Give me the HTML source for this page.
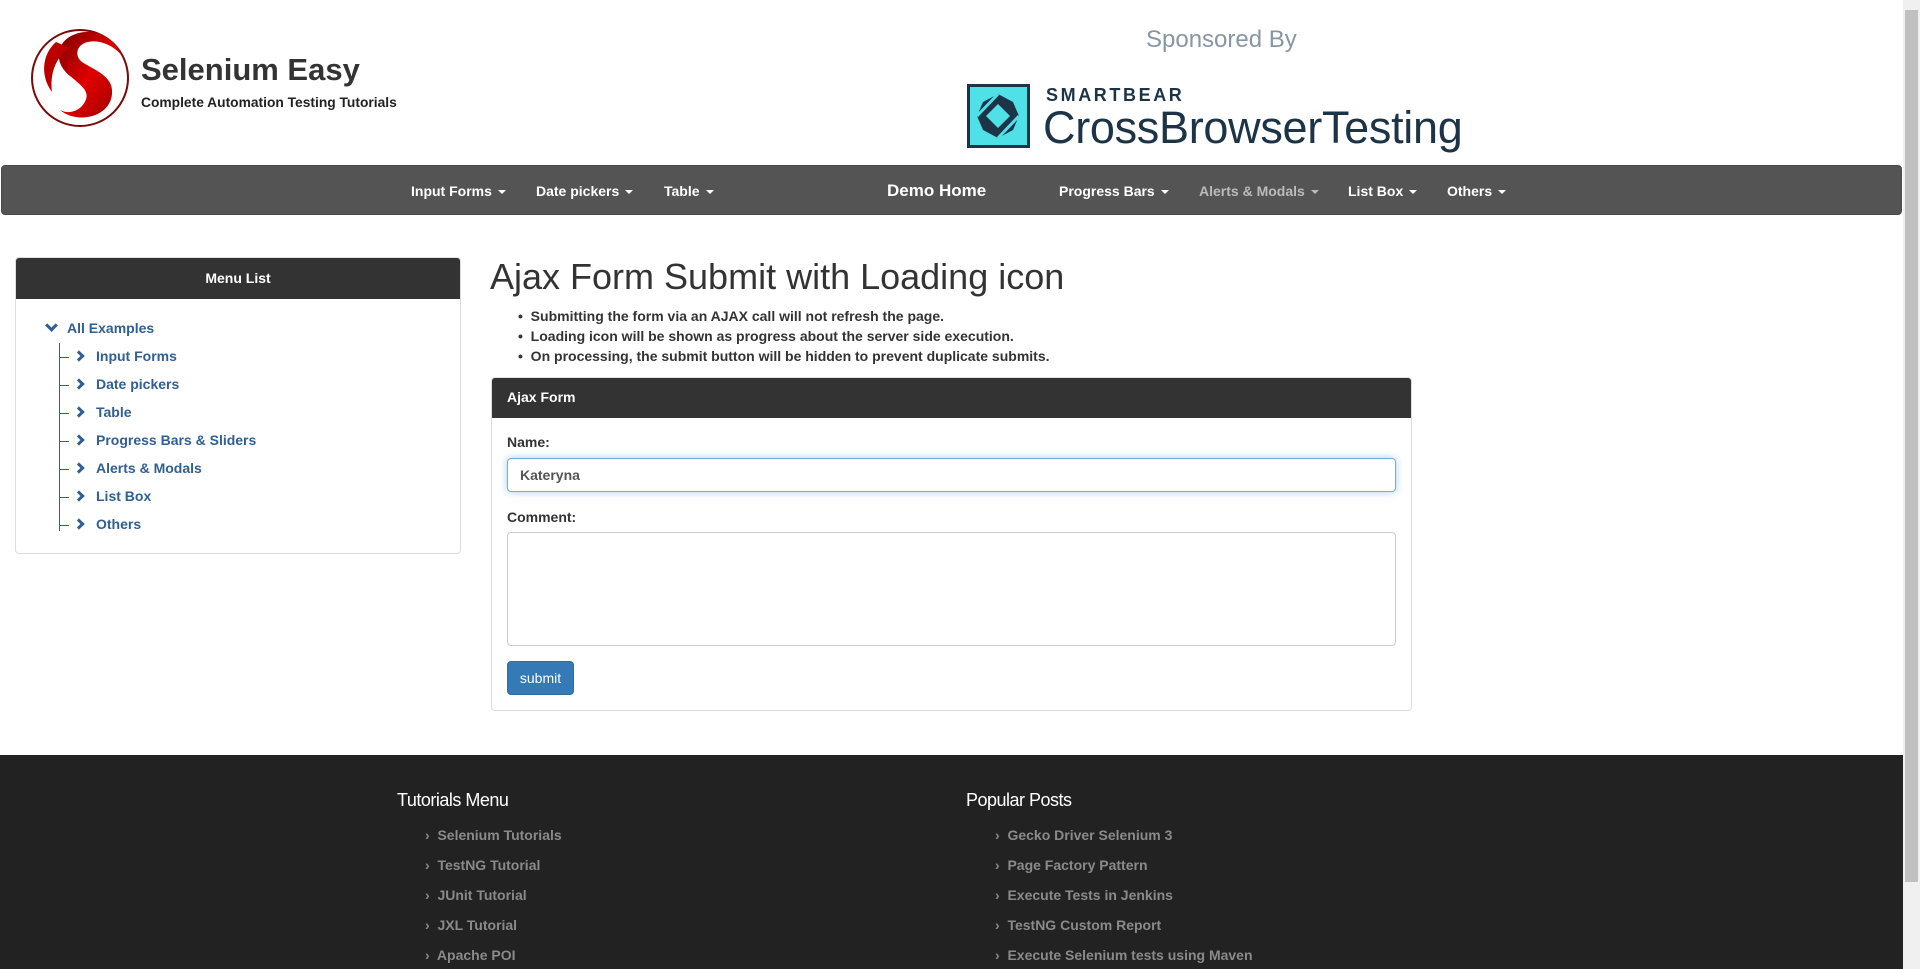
<!DOCTYPE html>
<html><head><meta charset="utf-8"><style>
*{box-sizing:border-box;margin:0;padding:0}
body{width:1920px;height:969px;overflow:hidden;background:#fff;font-family:"Liberation Sans",Arial,sans-serif;color:#333;position:relative}
.a{position:absolute;white-space:nowrap}
.nav{left:1px;top:165px;width:1901px;height:50px;background:#545454;border-radius:4px;border:1px solid #4a4a4a}
.ni{top:183px;color:#fff;font-weight:bold;font-size:14px}
.ni::after{content:"";display:inline-block;margin-left:6px;vertical-align:middle;border-top:4px solid currentColor;border-left:4px solid transparent;border-right:4px solid transparent}
.side{left:15px;top:257px;width:446px;height:297px;border:1px solid #ddd;border-radius:4px;overflow:hidden}
.hd{background:#333;color:#fff;font-weight:bold;font-size:14px}
.tr{color:#2f5f93;font-weight:bold;font-size:14px}
.chev{position:absolute;width:8px;height:8px;border-right:3px solid #2f5f93;border-bottom:3px solid #2f5f93;transform:rotate(-45deg)}
.li{font-weight:bold;font-size:14px;color:#333}
.ft{color:#8a8a8a;font-weight:bold;font-size:14px}
</style></head><body>
<svg class="a" style="left:30px;top:28px" width="100" height="100" viewBox="0 0 100 100">
<defs><linearGradient id="g" x1="0" y1="0" x2="1" y2="1"><stop offset="0" stop-color="#7a0000"/><stop offset=".5" stop-color="#e00000"/><stop offset="1" stop-color="#900"/></linearGradient></defs>
<circle cx="50" cy="50" r="48" fill="none" stroke="#7a0a0a" stroke-width="2"/>
<path d="M62 4 C30 2 18 30 40 48 C55 60 62 66 52 78 C46 84 38 86 30 82 C46 96 80 90 82 66 C84 48 64 42 52 34 C42 26 48 10 70 14 C78 16 86 20 92 28 C86 14 76 6 62 4Z" fill="url(#g)"/>
<path d="M26 14 C12 26 10 48 22 64 C20 48 24 30 40 20Z" fill="#b00"/>
</svg>
<div class="a" style="left:141px;top:52px;font-size:31px;font-weight:bold;color:#333">Selenium Easy</div>
<div class="a" style="left:141px;top:95px;font-size:13.8px;font-weight:bold;color:#222">Complete Automation Testing Tutorials</div>
<div class="a" style="left:1146px;top:26px;font-size:24px;color:#8896a4;font-weight:300">Sponsored By</div>
<svg class="a" style="left:967px;top:84px" width="63" height="64" viewBox="0 0 63 64"><rect x="1.5" y="1.5" width="60" height="61" fill="#4fe0e8" stroke="#1c3446" stroke-width="3"/><path d="M31 10 L46 18 L52 32 L46 46 L31 54 L16 46 L10 32 L16 18Z" fill="#1c3446"/><path d="M31 20 L43 32 L31 44 L19 32Z" fill="#4fe0e8"/><path d="M10 32 L31 10 M52 32 L31 54" stroke="#4fe0e8" stroke-width="3"/></svg>
<div class="a" style="left:1046px;top:85px;font-size:18px;font-weight:bold;letter-spacing:2.6px;color:#1c3446">SMARTBEAR</div>
<div class="a" style="left:1043px;top:102px;font-size:45px;color:#1c3446;letter-spacing:-.3px">CrossBrowserTesting</div>
<div class="a nav"></div>
<div class="a ni" style="left:411px">Input Forms</div>
<div class="a ni" style="left:536px">Date pickers</div>
<div class="a ni" style="left:664px">Table</div>
<div class="a" style="left:887px;top:181px;color:#fff;font-weight:bold;font-size:17px">Demo Home</div>
<div class="a ni" style="left:1059px">Progress Bars</div>
<div class="a ni" style="left:1199px;color:#bbb">Alerts &amp; Modals</div>
<div class="a ni" style="left:1348px">List Box</div>
<div class="a ni" style="left:1447px">Others</div>
<div class="a side"><div class="hd" style="height:41px;line-height:41px;text-align:center">Menu List</div></div>
<div class="a" style="left:47px;top:321px;width:9px;height:9px;border-right:3px solid #2f5f93;border-bottom:3px solid #2f5f93;transform:rotate(45deg)"></div>
<div class="a tr" style="left:67px;top:320px">All Examples</div>
<div class="a" style="left:59px;top:343px;width:1px;height:188px;background:#2f5f93"></div>
<div class="a" style="left:59px;top:357px;width:10px;height:1px;background:#2f5f93"></div>
<div class="a" style="left:59px;top:385px;width:10px;height:1px;background:#2f5f93"></div>
<div class="a" style="left:59px;top:413px;width:10px;height:1px;background:#2f5f93"></div>
<div class="a" style="left:59px;top:441px;width:10px;height:1px;background:#2f5f93"></div>
<div class="a" style="left:59px;top:469px;width:10px;height:1px;background:#2f5f93"></div>
<div class="a" style="left:59px;top:497px;width:10px;height:1px;background:#2f5f93"></div>
<div class="a" style="left:59px;top:525px;width:10px;height:1px;background:#2f5f93"></div>
<div class="chev" style="left:75px;top:352px"></div><div class="a tr" style="left:96px;top:348px">Input Forms</div>
<div class="chev" style="left:75px;top:380px"></div><div class="a tr" style="left:96px;top:376px">Date pickers</div>
<div class="chev" style="left:75px;top:408px"></div><div class="a tr" style="left:96px;top:404px">Table</div>
<div class="chev" style="left:75px;top:436px"></div><div class="a tr" style="left:96px;top:432px">Progress Bars &amp; Sliders</div>
<div class="chev" style="left:75px;top:464px"></div><div class="a tr" style="left:96px;top:460px">Alerts &amp; Modals</div>
<div class="chev" style="left:75px;top:492px"></div><div class="a tr" style="left:96px;top:488px">List Box</div>
<div class="chev" style="left:75px;top:520px"></div><div class="a tr" style="left:96px;top:516px">Others</div>
<div class="a" style="left:490px;top:256px;font-size:36px;color:#333">Ajax Form Submit with Loading icon</div>
<div class="a li" style="left:518px;top:308px">•&nbsp;&nbsp;Submitting the form via an AJAX call will not refresh the page.</div>
<div class="a li" style="left:518px;top:328px">•&nbsp;&nbsp;Loading icon will be shown as progress about the server side execution.</div>
<div class="a li" style="left:518px;top:348px">•&nbsp;&nbsp;On processing, the submit button will be hidden to prevent duplicate submits.</div>
<div class="a" style="left:491px;top:377px;width:921px;height:334px;border:1px solid #ddd;border-radius:4px;overflow:hidden"><div class="hd" style="height:40px;line-height:38px;padding-left:15px">Ajax Form</div></div>
<div class="a li" style="left:507px;top:434px">Name:</div>
<div class="a" style="left:507px;top:458px;width:889px;height:34px;border:1px solid #66afe9;border-radius:4px;box-shadow:0 0 8px rgba(102,175,233,.6);font-size:14px;font-weight:bold;color:#555;padding:8px 12px">Kateryna</div>
<div class="a li" style="left:507px;top:509px">Comment:</div>
<div class="a" style="left:507px;top:532px;width:889px;height:114px;border:1px solid #ccc;border-radius:4px"></div>
<div class="a" style="left:507px;top:661px;width:67px;height:34px;background:#337ab7;border:1px solid #2e6da4;border-radius:4px;color:#fff;font-size:14px;text-align:center;line-height:32px">submit</div>
<div class="a" style="left:0;top:755px;width:1903px;height:214px;background:#222"></div>
<div class="a" style="left:397px;top:790px;font-size:18px;color:#fff;letter-spacing:-.5px">Tutorials Menu</div>
<div class="a" style="left:966px;top:790px;font-size:18px;color:#fff;letter-spacing:-.5px">Popular Posts</div>
<div class="a ft" style="left:425px;top:827px">›&nbsp; Selenium Tutorials</div>
<div class="a ft" style="left:425px;top:857px">›&nbsp; TestNG Tutorial</div>
<div class="a ft" style="left:425px;top:887px">›&nbsp; JUnit Tutorial</div>
<div class="a ft" style="left:425px;top:917px">›&nbsp; JXL Tutorial</div>
<div class="a ft" style="left:425px;top:947px">›&nbsp; Apache POI</div>
<div class="a ft" style="left:995px;top:827px">›&nbsp; Gecko Driver Selenium 3</div>
<div class="a ft" style="left:995px;top:857px">›&nbsp; Page Factory Pattern</div>
<div class="a ft" style="left:995px;top:887px">›&nbsp; Execute Tests in Jenkins</div>
<div class="a ft" style="left:995px;top:917px">›&nbsp; TestNG Custom Report</div>
<div class="a ft" style="left:995px;top:947px">›&nbsp; Execute Selenium tests using Maven</div>
<div class="a" style="left:1903px;top:0;width:17px;height:969px;background:#f0f0f0"></div>
<div class="a" style="left:1905px;top:10px;width:13px;height:872px;background:#c0c0c0"></div>
</body></html>
